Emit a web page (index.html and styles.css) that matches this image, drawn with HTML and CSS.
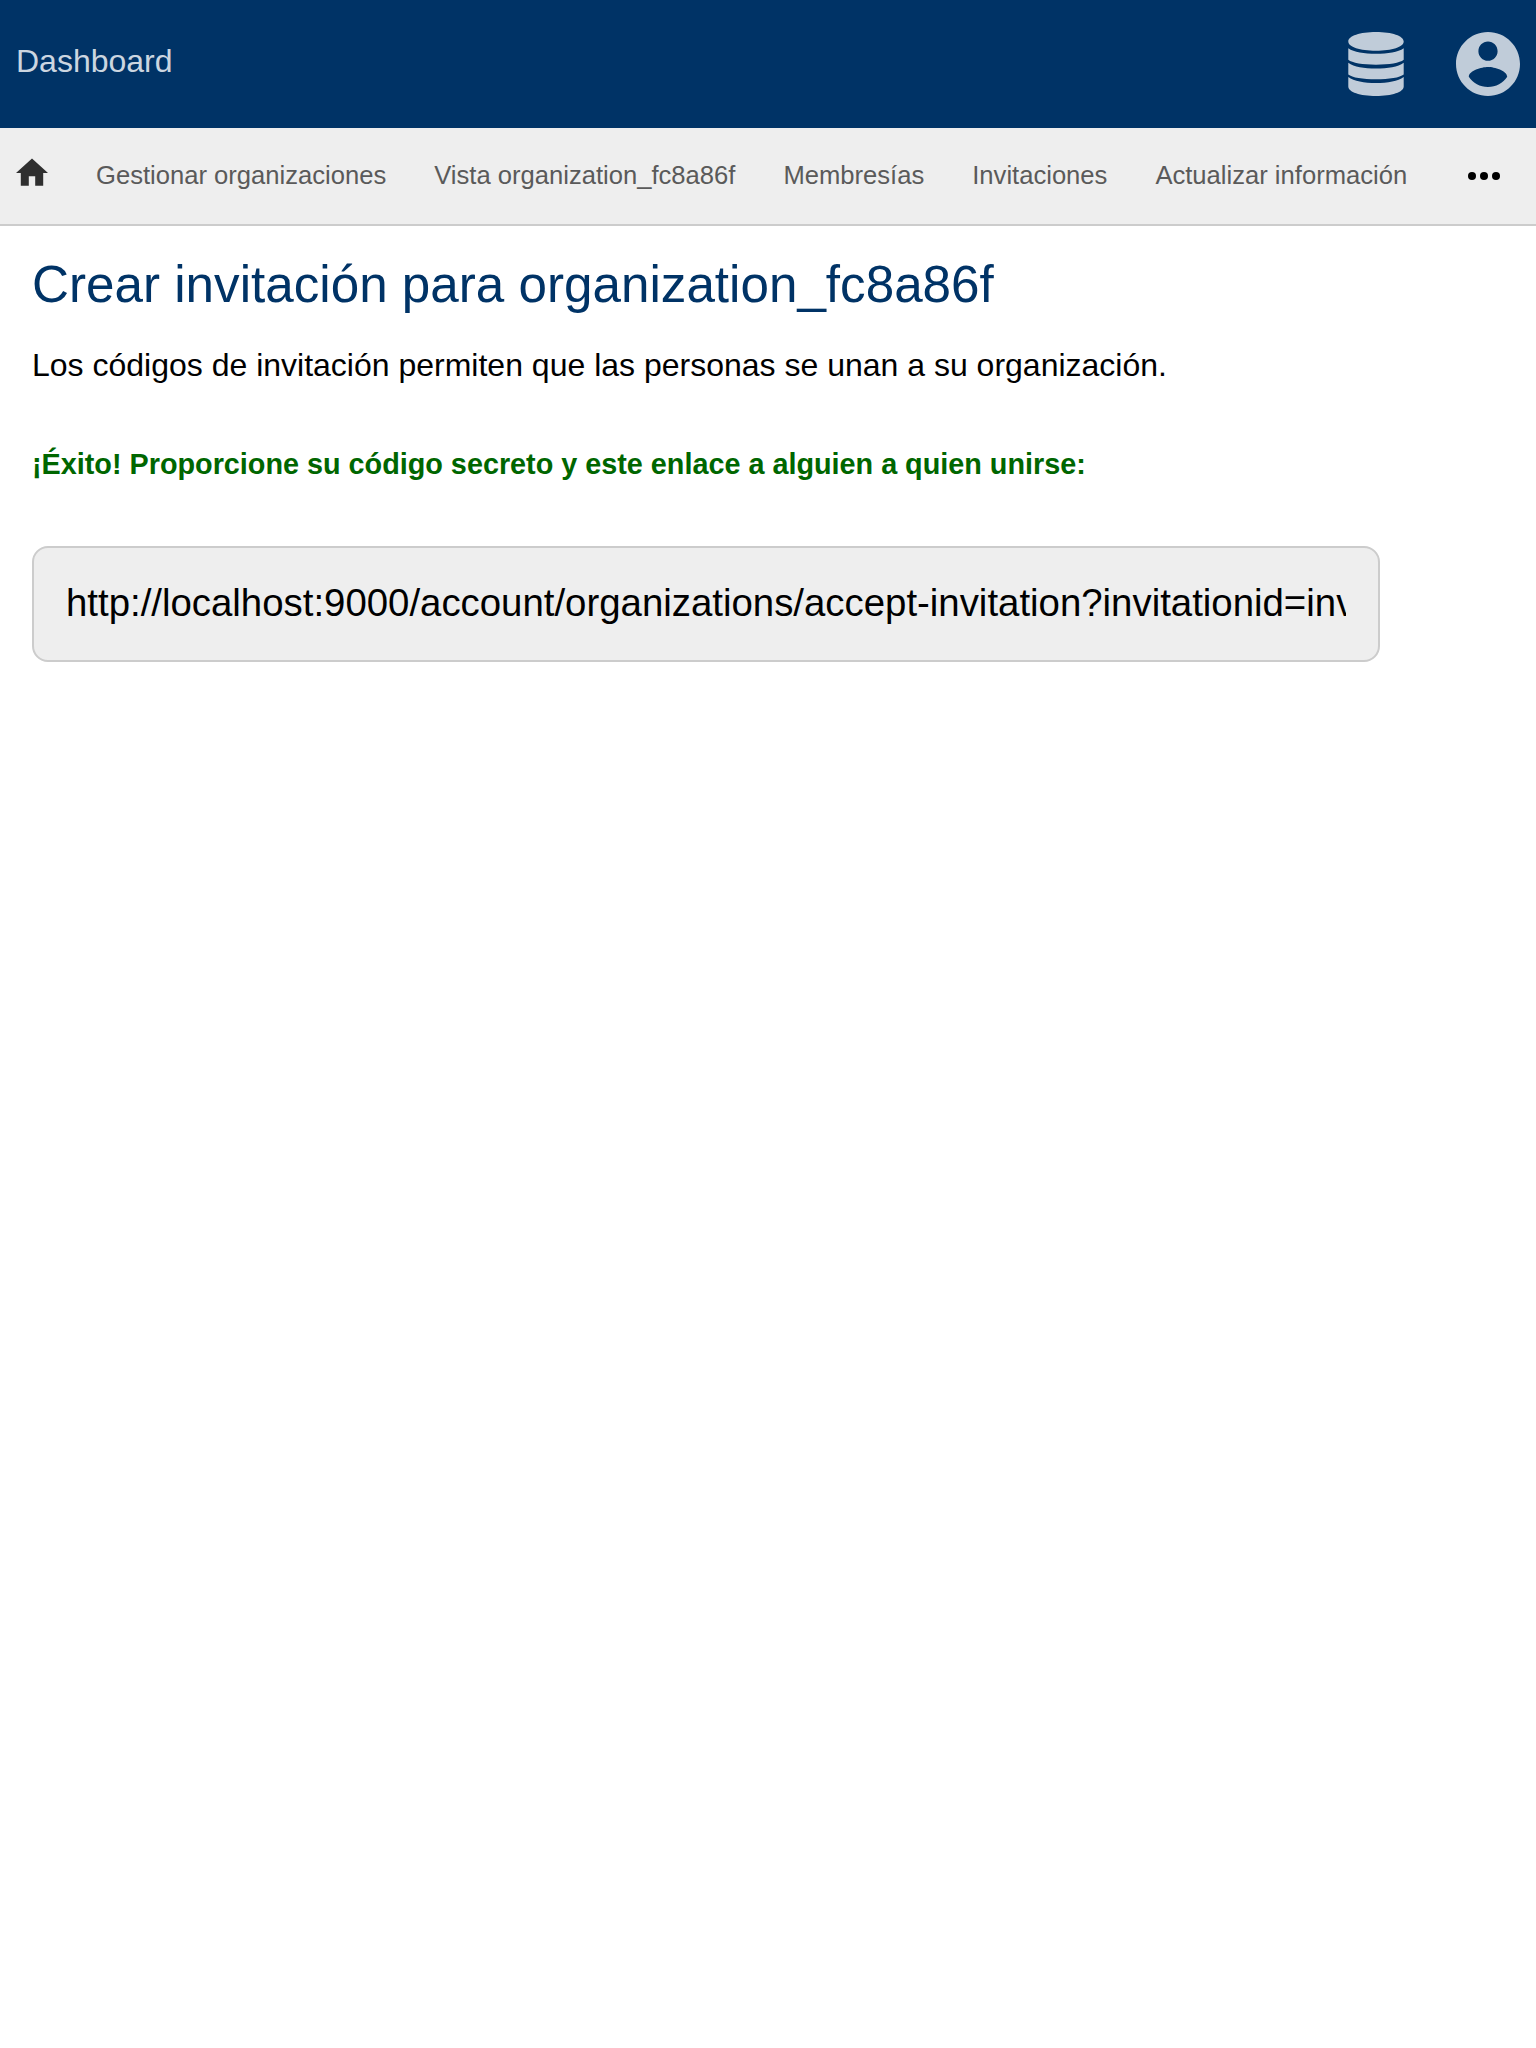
FILE: index.html
```html
<!DOCTYPE html>
<html lang="es">
<head>
<meta charset="utf-8">
<title>Dashboard</title>
<link rel="stylesheet" href="styles.css">
</head>
<body>
<header class="topbar">
  <a class="brand">Dashboard</a>
  <div class="actions">
    <svg class="icon-db" viewBox="0 0 56 64"><path d="M28 0C44 0 55.700 4 55.700 9.500S44 18.700 28 18.700 .3 15 .3 9.500 12 0 28 0zM.3 16.300C6 20.300 16 21.800 28 21.800S50 20.300 55.700 16.300V27.800C52 31 41 32.700 28 32.700S4 31 .3 27.800zM.3 30.700C6 35 16 36.500 28 36.500S50 35 55.700 30.700V42.500C52 45.700 41 47.300 28 47.300S4 45.700 .3 42.500zM.3 45C6 49.300 16 51 28 51S50 49.300 55.700 45V54.500C55.700 60 44 64 28 64S.3 60 .3 54.500z"/></svg>
    <svg class="icon-user" viewBox="2 2 20 20"><path d="M12 2C6.480 2 2 6.480 2 12s4.480 10 10 10 10-4.480 10-10S17.520 2 12 2zm0 3c1.660 0 3 1.340 3 3s-1.340 3-3 3-3-1.340-3-3 1.340-3 3-3zm0 14.200c-2.500 0-4.710-1.280-6-3.220.03-1.990 4-3.080 6-3.080 1.990 0 5.970 1.090 6 3.080-1.290 1.940-3.500 3.220-6 3.220z"/></svg>
  </div>
</header>
<nav class="nav">
  <svg class="icon-home" viewBox="2 2 20 20"><path d="M10 20v-6h4v6h5v-8h3L12 3 2 12h3v8z"/></svg>
  <a class="nav-link">Gestionar organizaciones</a>
  <a class="nav-link">Vista organization_fc8a86f</a>
  <a class="nav-link">Membresías</a>
  <a class="nav-link">Invitaciones</a>
  <a class="nav-link">Actualizar información</a>
  <svg class="icon-more" viewBox="0 0 32 8"><circle cx="4" cy="4" r="4"/><circle cx="16" cy="4" r="4"/><circle cx="28" cy="4" r="4"/></svg>
</nav>
<main class="content">
  <h1 class="title">Crear invitación para organization_fc8a86f</h1>
  <p class="intro">Los códigos de invitación permiten que las personas se unan a su organización.</p>
  <p class="success">¡Éxito! Proporcione su código secreto y este enlace a alguien a quien unirse:</p>
  <div class="link-box"><div class="link-text">http://localhost:9000/account/organizations/accept-invitation?invitationid=inv</div></div>
</main>
</body>
</html>
```
FILE: styles.css
```css
* { box-sizing: border-box; }
body {
  margin: 0;
  background: #fff;
  color: #000;
  font-family: "Liberation Sans", Arial, sans-serif;
}
.topbar {
  height: 128px;
  padding: 0 16px;
  background: #036;
  display: flex;
  align-items: center;
  justify-content: space-between;
}
.brand {
  color: #ccd6e0;
  font-size: 32px;
  line-height: 32px;
  padding-bottom: 6px;
}
.actions { display: flex; gap: 52px; fill: #c0ccd9; }
.icon-db { width: 56px; height: 64px; }
.icon-user { width: 64px; height: 64px; }
.nav {
  height: 98px;
  padding: 0 36px 0 16px;
  background: #eee;
  border-bottom: 2px solid #ccc;
  display: flex;
  align-items: center;
  gap: 48px;
}
.icon-home { width: 32px; height: 32px; fill: #2f2f2f; margin-bottom: 6px; }
.nav-link {
  color: #5a5a5a;
  font-size: 25.6px;
  line-height: 32px;
  margin-bottom: 2px;
  white-space: nowrap;
}
.icon-more { width: 32px; height: 8px; margin-left: auto; }
.content { padding: 30px 32px; }
.title {
  margin: 0;
  color: #036;
  font-size: 51.2px;
  line-height: 57px;
  font-weight: 400;
}
.intro {
  margin: 34px 0 0;
  font-size: 32px;
  line-height: 36px;
}
.success {
  margin: 65px 0 0;
  color: #060;
  font-size: 28.8px;
  line-height: 32px;
  font-weight: 700;
  letter-spacing: -0.01px;
}
.link-box {
  width: 1348px;
  height: 116px;
  margin-top: 66px;
  padding: 0 32px 2px;
  background: #eee;
  border: 2px solid #ccc;
  border-radius: 16px;
  display: flex;
  align-items: center;
}
.link-text {
  flex: 1;
  min-width: 0;
  overflow: hidden;
  white-space: nowrap;
  font-size: 38.4px;
  line-height: 44px;
  letter-spacing: -0.01px;
}
```
